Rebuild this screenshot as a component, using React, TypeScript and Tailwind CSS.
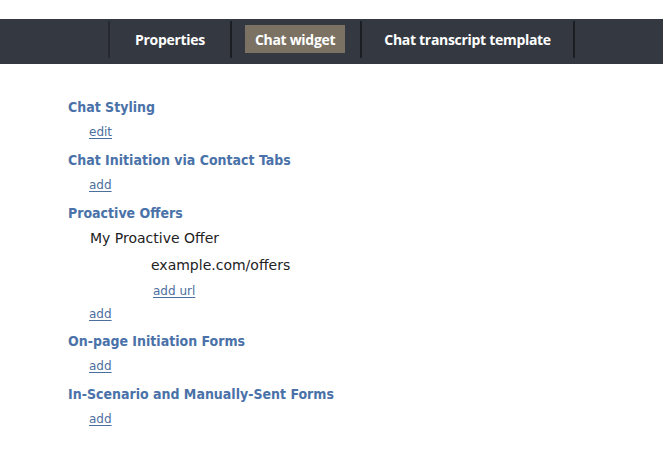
import React from "react";

const tabs = [
    { label: "Properties", active: false, pad: "px-[15px]" },
    { label: "Chat widget", active: true, pad: "pl-[13px] pr-[15px]" },
    { label: "Chat transcript template", active: false, pad: "px-[12px]" },
];

function Sep({ light = false }: { light?: boolean }) {
    return <div className={`w-[2px] h-[37px] self-start mt-[2px] ${light ? "bg-[#262a30]" : "bg-[#1b1e23]"}`} />;
}

function Heading({ children }: { children: React.ReactNode }) {
    return (
        <h2 className="text-[14px] font-bold text-[#4a72a8] leading-[18px] font-['DejaVu_Sans_Condensed','DejaVu_Sans',sans-serif]">
            {children}
        </h2>
    );
}

function LinkRow({ children, pad = "pl-[21px]", className = "" }: { children: React.ReactNode; pad?: string; className?: string }) {
    return (
        <div className={`${pad} h-[16px] leading-[16px] ${className}`}>
            <a href="#" className="text-[12px] text-[#4d6f9e] underline underline-offset-2 leading-[16px]">
                {children}
            </a>
        </div>
    );
}

export default function App() {
    return (
        <div className="w-[663px] h-[455px] bg-white font-['DejaVu_Sans',sans-serif]">
            {/* Top nav */}
            <div className="h-[19px]" />
            <div className="h-[45px] bg-[#343841] flex pl-[108px]">
                <Sep light />
                {tabs.map(tab => (
                    <React.Fragment key={tab.label}>
                        <div className={`flex items-start pt-[6px] ${tab.pad}`}>
                            <span
                                className={`h-[28px] px-[10px] flex items-center text-[14px] font-bold text-white font-['Open_Sans',sans-serif] tracking-[-0.3px] ${tab.active ? "bg-[#7b7264]" : ""}`}
                            >
                                {tab.label}
                            </span>
                        </div>
                        <Sep />
                    </React.Fragment>
                ))}
            </div>

            {/* Content */}
            <div className="pl-[68px] pt-[34px] flex flex-col">
                <Heading>Chat Styling</Heading>
                <LinkRow className="mt-[7px] mb-[12px]">edit</LinkRow>

                <Heading>Chat Initiation via Contact Tabs</Heading>
                <LinkRow className="mt-[7px] mb-[12px]">add</LinkRow>

                <Heading>Proactive Offers</Heading>
                <div className="pl-[22px] mt-[6px] text-[14px] text-[#222] leading-[20px]">My Proactive Offer</div>
                <div className="pl-[83px] mt-[7px] text-[14px] text-[#222] leading-[20px]">example.com/offers</div>
                <LinkRow pad="pl-[85px]" className="mt-[7px]">add url</LinkRow>
                <LinkRow className="mt-[7px] mb-[11px]">add</LinkRow>

                <Heading>On-page Initiation Forms</Heading>
                <LinkRow className="mt-[7px] mb-[12px]">add</LinkRow>

                <Heading>In-Scenario and Manually-Sent Forms</Heading>
                <LinkRow className="mt-[7px]">add</LinkRow>
            </div>
        </div>
    );
}
